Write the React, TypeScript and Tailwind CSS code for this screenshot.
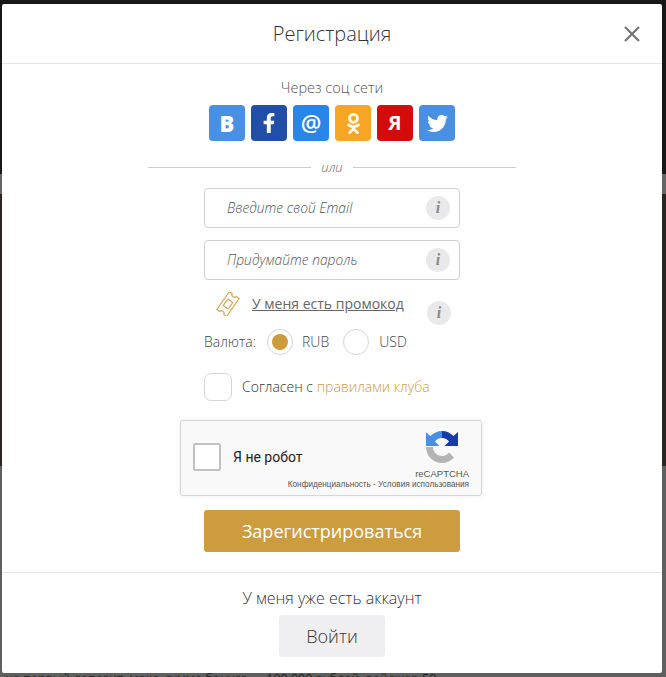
import { FaFacebookF, FaOdnoklassniki, FaTwitter } from 'react-icons/fa'

const inputs = ['Введите свой Email', 'Придумайте пароль']

function InfoBadge() {
    return (
        <span className="flex h-6 w-6 shrink-0 items-center justify-center rounded-full bg-[#e9e8ea] font-['Liberation_Serif',serif] text-base font-bold italic leading-none text-[#8a8a8a]">
            i
        </span>
    )
}

function Social({ bg, children }: { bg: string; children: React.ReactNode }) {
    return <div className={`flex h-9 w-9 items-center justify-center rounded-[4px] text-white ${bg}`}>{children}</div>
}

function TicketIcon() {
    return (
        <svg width="24" height="24" viewBox="0 0 24 24" fill="none" stroke="#d3ab55" strokeWidth="1.2" strokeLinejoin="round" className="block">
            <g transform="rotate(-55 12 12)">
                <path d="M1 6 H23 V9.5 C21.6 9.5 20.8 10.8 20.8 12 C20.8 13.2 21.6 14.5 23 14.5 V18 H1 V14.5 C2.4 14.5 3.2 13.2 3.2 12 C3.2 10.8 2.4 9.5 1 9.5 Z" />
                <rect x="8" y="9" width="8" height="6" />
            </g>
        </svg>
    )
}

function RecaptchaLogo() {
    return (
        <svg width="32" height="32" viewBox="0 0 32 32" className="block">
            <path d="M0 16 H7 C7 21 11 25 16 25 C19 25 21.5 23.6 23 21.5 L28 26.5 C25 30 20.8 32 16 32 C7.2 32 0 24.8 0 16 Z" fill="#b4b4b4" />
            <path d="M16 0 V7 C13 7 10.5 8.5 9 10.5 L13.5 15 H0 V1.5 L4.5 5 C7.4 2 11.5 0 16 0 Z" fill="#4a90e2" />
            <path d="M16 0 C20.5 0 24.5 1.9 27.4 5 L32 1 V15 H18.5 L23 10.5 C21.4 8.4 19 7 16 7 Z" fill="#1c3aa9" />
        </svg>
    )
}

export default function App() {
    return (
        <div className="relative h-[677px] w-[666px] overflow-hidden bg-[#5f5f5f] font-['Open_Sans',sans-serif]">
            {/* page behind the overlay */}
            <div className="h-[174px] bg-[#181818]" />
            <div className="h-5 bg-[#666666]" />
            <div className="h-[272px] bg-[#2a2522]" />
            <div className="h-[207px] bg-[#5f5f5f]" />
            <p className="absolute left-[5px] top-[669px] whitespace-nowrap text-[12.5px] leading-5 text-[#222222]">
                на первый депозит, макс. сумма бонуса — 100 000 рублей, вейджер 50
            </p>

            <div className="absolute left-[2px] top-[4px] flex h-[669px] w-[660px] flex-col rounded-[2px] bg-white">
                <header className="relative flex h-[60px] shrink-0 items-center justify-center border-b border-[#e5e5e5]">
                    <h1 className="text-[20px] font-light leading-none text-[#333333]">Регистрация</h1>
                    <button className="absolute right-[21px] top-[21px] text-[#757575]">
                        <svg width="18" height="18" viewBox="0 0 18 18" stroke="currentColor" strokeWidth="2.2" className="block">
                            <path d="M2 2 L16 16 M16 2 L2 16" />
                        </svg>
                    </button>
                </header>

                <div className="flex flex-col items-center pt-[14px]">
                    <p className="text-[14.5px] font-light leading-[19px] text-[#555555]">Через соц сети</p>
                    <div className="mt-[8px] flex gap-[6px]">
                        <Social bg="bg-[#4a90e2]">
                            <span className="text-[22px] font-extrabold leading-none">B</span>
                        </Social>
                        <Social bg="bg-[#214fa8]">
                            <FaFacebookF size={20} />
                        </Social>
                        <Social bg="bg-[#2a86e6]">
                            <span className="text-[23px] font-semibold leading-none">@</span>
                        </Social>
                        <Social bg="bg-[#f6a623]">
                            <FaOdnoklassniki size={21} />
                        </Social>
                        <Social bg="bg-[#d40b0b]">
                            <span className="text-[20px] font-bold leading-none">Я</span>
                        </Social>
                        <Social bg="bg-[#4a90e2]">
                            <FaTwitter size={21} />
                        </Social>
                    </div>

                    <div className="mt-[16px] flex w-[368px] items-center gap-[10px]">
                        <div className="h-px flex-1 bg-[#cccccc]" />
                        <span className="text-[13px] font-light italic leading-[20px] text-[#666666]">или</span>
                        <div className="h-px flex-1 bg-[#cccccc]" />
                    </div>

                    <div className="mt-[11px] flex w-[256px] flex-col gap-3">
                        {inputs.map(text => (
                            <div key={text} className="flex h-10 items-center justify-between rounded-[4px] border border-[#cfcfcf] pl-[22px] pr-[9px]">
                                <span className="text-[13.8px] font-light italic text-[#555555]">{text}</span>
                                <InfoBadge />
                            </div>
                        ))}
                    </div>

                    <div className="mt-[11px] flex w-[256px] items-start">
                        <div className="ml-[12px] mt-[1px]">
                            <TicketIcon />
                        </div>
                        <span className="ml-[12px] mt-[3px] text-sm leading-[20px] text-[#666666] underline">У меня есть промокод</span>
                        <div className="ml-auto mr-[9px] mt-[10px]">
                            <InfoBadge />
                        </div>
                    </div>

                    <div className="mt-[4px] flex w-[256px] items-center text-sm font-light text-[#444444]">
                        <span>Валюта:</span>
                        <span className="ml-[11px] flex h-[26px] w-[26px] items-center justify-center rounded-full border border-[#d5d5d5]">
                            <span className="h-4 w-4 rounded-full bg-[#cd9c3f]" />
                        </span>
                        <span className="ml-[9px]">RUB</span>
                        <span className="ml-[14px] h-[26px] w-[26px] rounded-full border border-[#d5d5d5]" />
                        <span className="ml-[10px]">USD</span>
                    </div>

                    <div className="mt-[18px] flex w-[256px] items-center text-sm">
                        <span className="h-7 w-7 rounded-[7px] border border-[#d5d5d5]" />
                        <span className="ml-[10px] font-light text-[#333333]">
                            Согласен с <span className="text-[#cd9c3f]">правилами клуба</span>
                        </span>
                    </div>

                    <div className="relative mr-[2px] mt-[19px] h-[76px] w-[302px] rounded-[3px] border border-[#d6d6d6] bg-[#f9f9f9] font-['Roboto',sans-serif] shadow-[0_0_4px_rgba(0,0,0,0.08)]">
                        <div className="flex h-full items-start pl-3 pt-[22px]">
                            <span className="h-7 w-7 rounded-[2px] border-2 border-[#c1c1c1] bg-white" />
                            <span className="ml-3 mt-[5px] text-sm leading-[18px] text-[#222222]">Я не робот</span>
                        </div>
                        <div className="absolute right-[23px] top-[10px]">
                            <RecaptchaLogo />
                        </div>
                        <span className="absolute right-[12px] top-[45px] font-['Liberation_Sans',sans-serif] text-[9.5px] leading-4 text-[#555555]">reCAPTCHA</span>
                        <span className="absolute right-[12px] top-[58px] whitespace-nowrap font-['Liberation_Sans',sans-serif] text-[8.2px] leading-3 text-[#555555]">Конфиденциальность - Условия использования</span>
                    </div>

                    <button className="mt-[14px] h-[42px] w-[256px] rounded-[3px] bg-[#cd9c3f] text-[18px] text-white">Зарегистрироваться</button>
                </div>

                <footer className="mt-5 flex flex-col items-center border-t border-[#e5e5e5] pt-[14px]">
                    <p className="text-base font-light leading-[22px] text-[#333333]">У меня уже есть аккаунт</p>
                    <button className="mt-[6px] h-[42px] w-[106px] rounded-[4px] bg-[#efeef0] text-[18px] font-light text-[#333333]">Войти</button>
                </footer>
            </div>
        </div>
    )
}
